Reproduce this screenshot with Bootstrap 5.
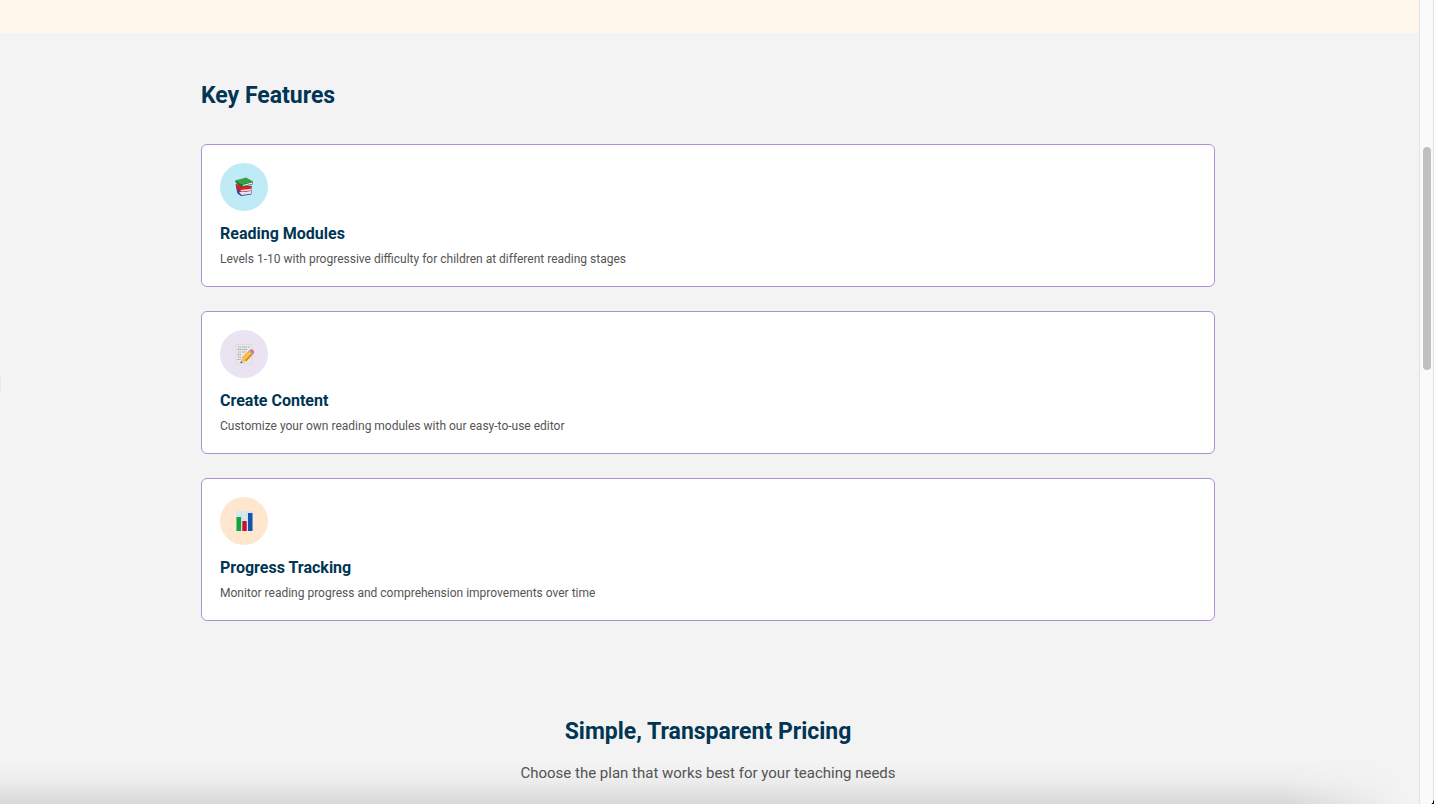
<!DOCTYPE html>
<html lang="en">
<head>
<meta charset="utf-8">
<meta name="viewport" content="width=device-width, initial-scale=1">
<title>Key Features</title>
<link rel="stylesheet" href="https://cdn.jsdelivr.net/npm/bootstrap@5.3.0/dist/css/bootstrap.min.css">
<style>
  body { font-family: Roboto, "Liberation Sans", sans-serif; background: #f3f3f3; color: #555; }
  .hero-end { height: 33px; background: #fff6ec; }
  .page-col { max-width: 1014px; }
  .page-body { padding: 47px 3px 0 0; }
  h2, h3 { color: #003554; font-weight: 700; margin: 0; }
  h2 { font-size: 23px; line-height: 32px; }
  h3 { font-size: 16px; line-height: 24px; }
  .feature-list { gap: 24px; margin-top: 32px; }
  .feature { border: 1px solid #ad8fd3; border-radius: 6px; padding: 18px 18px 17px; background: #fff; }
  .feature-icon { width: 48px; height: 48px; margin-bottom: 11px; }
  .feature-icon svg { width: 20px; height: 20px; }
  .feature p { font-size: 12px; line-height: 20px; margin: 3px 0 0; }
  .bg-sky { background: #bfebf7; }
  .bg-lilac { background: #e9e3f2; }
  .bg-peach { background: #fee7ce; }
  .pricing { padding-top: 95px; }
  .pricing p { font-size: 15px; line-height: 24px; margin: 13px 0 0; }
  .scroll-track { width: 15px; padding: 147px 2px 0 3px; background: #fafafa; border: solid #e3e3e3; border-width: 0 1px; }
  .scroll-thumb { width: 8px; height: 223px; background: #c0c0c0; }
  .bottom-shade { height: 42px; background: linear-gradient(to bottom, transparent, rgba(0,0,0,.025) 45%, rgba(0,0,0,.11));
    -webkit-mask-image: linear-gradient(to right, #000 calc(100% - 150px), transparent calc(100% - 30px)); mask-image: linear-gradient(to right, #000 calc(100% - 150px), transparent calc(100% - 30px)); }
  .window-corner { width: 3px; height: 7px; background: radial-gradient(ellipse at 0 0, transparent 65%, #000 75%); }
  .edge-mark { top: 376px; width: 1px; height: 16px; background: #e8e8e8; }
</style>
</head>
<body>
<div class="d-flex vh-100 overflow-hidden">
  <main class="flex-grow-1">
    <div class="hero-end"></div>
    <div class="page-body">
      <div class="page-col mx-auto">
        <section>
          <h2>Key Features</h2>
          <div class="feature-list d-flex flex-column">
            <article class="feature">
              <div class="feature-icon bg-sky rounded-circle d-flex align-items-center justify-content-center">
                <svg viewBox="0 0 20 20" aria-hidden="true">
                  <path d="M2 10 3.500 16.500 7 19 17.500 17.500 17.500 13z" fill="#39438f"/>
                  <path d="M5 15 17 14 17.300 16.800 7.500 18z" fill="#e5e4ec"/>
                  <path d="M1.500 7 2.300 11 6 15 17 14 18 9 9 8z" fill="#c91f2a"/>
                  <path d="M6.500 13 17 11.700 17 13.400 7 14.500z" fill="#f0d9d9"/>
                  <path d="M3 8 7 11.500 17 10" fill="none" stroke="#dd2930"/>
                  <path d="M1 3.500 2 6 7.500 10 19 7.300 19 4.500z" fill="#16752d"/>
                  <path d="M8.500 7.900 18.700 5.300 18.500 6.800 9 9z" fill="#edf0e5"/>
                  <path d="M1 3.500 12 .5 19.300 4.500 7.500 7.600z" fill="#3b9f48"/>
                </svg>
              </div>
              <h3>Reading Modules</h3>
              <p>Levels 1-10 with progressive difficulty for children at different reading stages</p>
            </article>
            <article class="feature">
              <div class="feature-icon bg-lilac rounded-circle d-flex align-items-center justify-content-center">
                <svg viewBox="0 0 20 20" aria-hidden="true">
                  <path d="M2 .5h16v19H2z" fill="#e9e9e9" stroke="#d2d2d2" stroke-width=".5"/>
                  <path d="M4 3h3M8 3h5M14 3h2M3.500 5.500h5M9.500 5.500h4M4 8h3M8 8h4M3.500 10.500h4M4 13h3M3.500 15.500h3" stroke="#9c9c9c" stroke-width=".9" stroke-dasharray="1.500 .4"/>
                  <path d="M6.500 19.300 8 13.500 12.500 17.500z" fill="#edc18b"/>
                  <path d="M6.500 19.300 7 17.200 8.500 18.500z" fill="#333"/>
                  <path d="M8 13.500 14.800 6.800 18.800 10.800 12.500 17.500z" fill="#f2ad25"/>
                  <path d="M9.600 15 16.500 8.200" stroke="#ffd35b" stroke-width="1.200"/>
                  <path d="M11.700 16.800 18.100 10.200" stroke="#b96e20"/>
                  <path d="M14.500 7.200 16 5.700 19.900 9.600 18.500 11.100z" fill="#9eafb8"/>
                  <path d="M15.700 6Q17.500 4.300 19.200 6 21 8 19.600 9.900z" fill="#ec6777"/>
                </svg>
              </div>
              <h3>Create Content</h3>
              <p>Customize your own reading modules with our easy-to-use editor</p>
            </article>
            <article class="feature">
              <div class="feature-icon bg-peach rounded-circle d-flex align-items-center justify-content-center">
                <svg viewBox="0 0 20 20" aria-hidden="true">
                  <path d="M2 0h17v20H2z" fill="#dbe7ee"/>
                  <path d="M2 4h17M2 8h17M2 12h17M2 16h17M7.500 0v20M13 0v20" stroke="#c8d8e1" stroke-width=".5"/>
                  <path d="M2.500 6h4.500V20H2.500z" fill="#12a33c"/>
                  <path d="M8.300 10h4.400V20H8.300z" fill="#cb102c"/>
                  <path d="M14 2h4.500V20H14z" fill="#1454ae"/>
                </svg>
              </div>
              <h3>Progress Tracking</h3>
              <p>Monitor reading progress and comprehension improvements over time</p>
            </article>
          </div>
        </section>
        <section class="pricing text-center">
          <h2>Simple, Transparent Pricing</h2>
          <p>Choose the plan that works best for your teaching needs</p>
        </section>
      </div>
    </div>
  </main>
  <div class="scroll-track flex-shrink-0" aria-hidden="true">
    <div class="scroll-thumb rounded-pill"></div>
  </div>
</div>
<div class="edge-mark position-fixed start-0"></div>
<div class="bottom-shade position-fixed bottom-0 start-0 end-0 pe-none"></div>
<div class="window-corner position-fixed bottom-0 end-0"></div>
<script src="https://cdn.jsdelivr.net/npm/bootstrap@5.3.0/dist/js/bootstrap.bundle.min.js"></script>
</body>
</html>
